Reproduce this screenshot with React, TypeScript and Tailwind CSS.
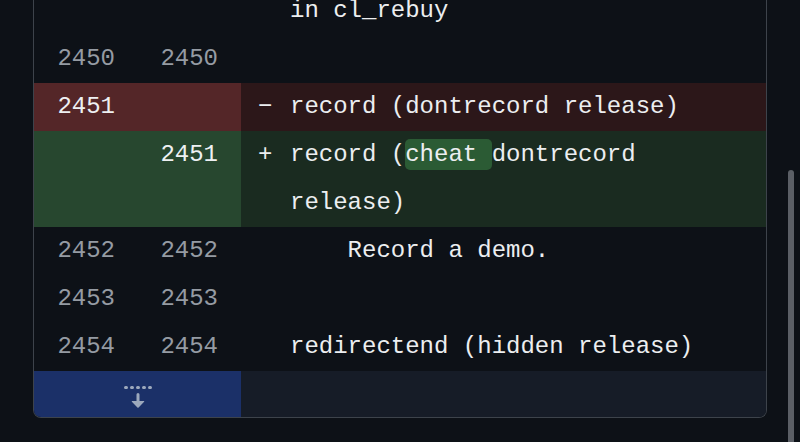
import React from "react";

type Row = {
  kind: "ctx" | "del" | "add";
  left?: string;
  right?: string;
  code: React.ReactNode;
};

const rows: Row[] = [
  { kind: "ctx", code: "in cl_rebuy" },
  { kind: "ctx", left: "2450", right: "2450", code: "" },
  { kind: "del", left: "2451", code: "record (dontrecord release)" },
  {
    kind: "add",
    right: "2451",
    code: (
      <>
        record (
        <span className="rounded-[5px] bg-[#2b5b34] py-[2px]">cheat </span>
        dontrecord release)
      </>
    ),
  },
  { kind: "ctx", left: "2452", right: "2452", code: "    Record a demo." },
  { kind: "ctx", left: "2453", right: "2453", code: "" },
  { kind: "ctx", left: "2454", right: "2454", code: "redirectend (hidden release)" },
];

function FoldDown() {
  return (
    <svg width="32" height="32" viewBox="0 0 16 16" fill="#9ca8bc">
      <path d="M8.177 14.323l2.896-2.896a.25.25 0 00-.177-.427H8.75V7.764a.75.75 0 10-1.5 0V11H5.104a.25.25 0 00-.177.427l2.896 2.896a.25.25 0 00.354 0zM2.25 5a.75.75 0 000-1.5h-.5a.75.75 0 000 1.5h.5zM6 4.25a.75.75 0 01-.75.75h-.5a.75.75 0 010-1.5h.5a.75.75 0 01.75.75zM8.25 5a.75.75 0 000-1.5h-.5a.75.75 0 000 1.5h.5zM12 4.25a.75.75 0 01-.75.75h-.5a.75.75 0 010-1.5h.5a.75.75 0 01.75.75zm2.25.75a.75.75 0 000-1.5h-.5a.75.75 0 000 1.5h.5z" />
    </svg>
  );
}

export default function App() {
  const gutterBg = (k: Row["kind"]) =>
    k === "del" ? "bg-[#542628]" : k === "add" ? "bg-[#27472f]" : "bg-[#0d1117]";
  const codeBg = (k: Row["kind"]) =>
    k === "del" ? "bg-[#2c1719]" : k === "add" ? "bg-[#1a2b20]" : "bg-[#0d1117]";
  const numColor = (k: Row["kind"]) => (k === "ctx" ? "text-[#959ba3]" : "text-[#eef0f2]");

  return (
    <div
      className="relative w-[800px] h-[442px] overflow-hidden bg-[#0d1117] text-[24px] leading-[48px] text-[#eceef0]"
      style={{ fontFamily: '"Liberation Mono", "DejaVu Sans Mono", monospace' }}
    >
      <div className="ml-[33px] -mt-[13px] w-[734px] overflow-hidden rounded-b-[8px] border-x border-b border-[#3d434b]">
        {rows.map((r, i) => (
          <div key={i} className="grid grid-cols-[104px_103px_1fr]">
            <div className={`${gutterBg(r.kind)} ${numColor(r.kind)} pr-[23px] text-right`}>{r.left}</div>
            <div className={`${gutterBg(r.kind)} ${numColor(r.kind)} pr-[23px] text-right`}>{r.right}</div>
            <div className={`${codeBg(r.kind)} flex pl-[17px] pr-[16px]`}>
              <span className="w-[32px] shrink-0">
                {r.kind === "del" ? "−" : r.kind === "add" ? "+" : ""}
              </span>
              <span className="whitespace-pre-wrap">{r.code}</span>
            </div>
          </div>
        ))}
        <div className="grid h-[46px] grid-cols-[207px_1fr]">
          <div className="flex items-center justify-center bg-[#1b3068] pt-[2px]">
            <FoldDown />
          </div>
          <div className="bg-[#161c27]" />
        </div>
      </div>
      <div className="absolute left-[788px] top-[170px] h-[300px] w-[6px] rounded-full bg-[#5b5f66]" />
    </div>
  );
}
